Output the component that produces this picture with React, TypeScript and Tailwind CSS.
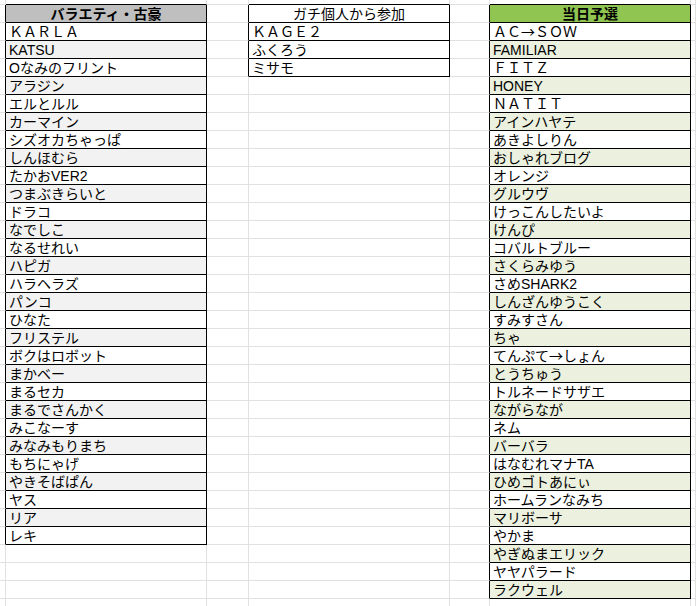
import type { ReactNode } from 'react';

type Sheet = {
  col: number;
  header: string;
  headerClass: string;
  stripeClass: string;
  items: string[];
};

const sheets: Sheet[] = [
  {
    col: 1,
    header: 'バラエティ・古豪',
    headerClass: 'bg-[#bfbfbf] font-bold',
    stripeClass: 'bg-[#f2f2f2]',
    items: [
      'ＫＡＲＬＡ', 'KATSU', 'Oなみのフリント', 'アラジン', 'エルとルル', 'カーマイン',
      'シズオカちゃっぱ', 'しんほむら', 'たかおVER2', 'つまぶきらいと', 'ドラコ', 'なでしこ',
      'なるせれい', 'ハピガ', 'ハラヘラズ', 'パンコ', 'ひなた', 'フリステル', 'ボクはロボット',
      'まかベー', 'まるセカ', 'まるでさんかく', 'みこなーす', 'みなみもりまち', 'もちにゃげ',
      'やきそばぱん', 'ヤス', 'リア', 'レキ',
    ],
  },
  {
    col: 3,
    header: 'ガチ個人から参加',
    headerClass: 'bg-white',
    stripeClass: 'bg-white',
    items: ['ＫＡＧＥ２', 'ふくろう', 'ミサモ'],
  },
  {
    col: 5,
    header: '当日予選',
    headerClass: 'bg-[#8fc550] font-bold',
    stripeClass: 'bg-[#ebf1de]',
    items: [
      'ＡＣ→ＳＯＷ', 'FAMILIAR', 'ＦＩＴＺ', 'HONEY', 'ＮＡＴＩＴ', 'アインハヤテ', 'あきよしりん',
      'おしゃれブログ', 'オレンジ', 'グルウヴ', 'けっこんしたいよ', 'けんぴ', 'コバルトブルー',
      'さくらみゆう', 'さめSHARK2', 'しんざんゆうこく', 'すみすさん', 'ちゃ', 'てんぷて→しょん',
      'とうちゅう', 'トルネードサザエ', 'ながらなが', 'ネム', 'バーバラ', 'はなむれマナTA',
      'ひめゴトあにぃ', 'ホームランなみち', 'マリボーサ', 'やかま', 'やぎぬまエリック',
      'ヤヤパラード', 'ラクウェル',
    ],
  },
];

const COLS = 7;
const ROWS = 35;

// which sheet (if any) owns a cell; row 1 is the header row
function owner(r: number, c: number) {
  const s = sheets.find(s => s.col === c);
  if (!s || r < 1 || r > s.items.length + 1) return null;
  return s;
}

// arrows come out tiny in Liberation Sans, use the CJK full-width glyph
function label(text: string) {
  const parts = text.split('→');
  return parts.map((p, i) => (
    <span key={i}>
      {i > 0 && <span className="font-['Noto_Sans_CJK_JP']">→</span>}
      {p}
    </span>
  ));
}

function Cell({ r, c }: { r: number; c: number }) {
  const s = owner(r, c);
  const rightBlack = !!s || !!owner(r, c + 1);
  const bottomBlack = !!s || !!owner(r + 1, c);

  let fill = '';
  let content: ReactNode = null;
  let align = 'justify-start pl-[3px]';
  if (s) {
    if (r === 1) {
      fill = s.headerClass;
      content = s.header;
      align = 'justify-center';
    } else {
      const i = r - 2;
      fill = i % 2 === 1 ? s.stripeClass : 'bg-white';
      content = label(s.items[i]);
    }
  }

  return (
    <div
      className={`flex items-center whitespace-nowrap border-r border-b ${align} ${fill} ${
        rightBlack ? 'border-r-black' : 'border-r-[#e1e1e1]'
      } ${bottomBlack ? 'border-b-black' : 'border-b-[#e1e1e1]'}`}
    >
      {content}
    </div>
  );
}

export default function App() {
  const cells: ReactNode[] = [];
  for (let r = 0; r < ROWS; r++) {
    for (let c = 0; c < COLS; c++) {
      cells.push(<Cell key={`${r}-${c}`} r={r} c={c} />);
    }
  }

  return (
    <div className="h-[606px] w-[696px] overflow-hidden bg-white">
      <div
        className="grid grid-cols-[6px_201px_42px_201px_40px_201px_1fr] grid-rows-[5px_repeat(34,18px)] text-[14px] leading-none text-black"
        style={{ fontFamily: '"Liberation Sans", "Noto Sans CJK JP", sans-serif' }}
      >
        {cells}
      </div>
    </div>
  );
}
